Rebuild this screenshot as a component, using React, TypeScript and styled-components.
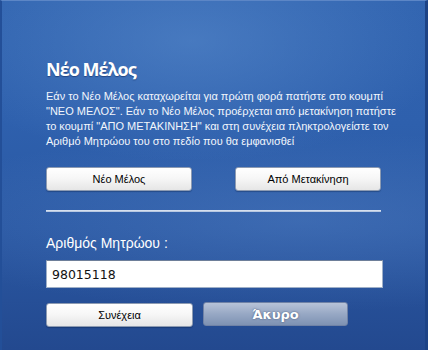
import styled, {createGlobalStyle} from 'styled-components';

const GlobalStyle = createGlobalStyle`
	html, body {
		margin: 0;
		padding: 0;
		background: #2a58a3;
	}
`;

const Panel = styled.div`
	box-sizing: border-box;
	width: 428px;
	height: 350px;
	display: flex;
	flex-direction: column;
	padding: 56px 44px 0 44px;
	overflow: hidden;
	border-top: 1px solid #5c86c6;
	border-left: 2px solid #234f98;
	border-right: 3px solid #1d4386;
	background:
		radial-gradient(ellipse 260px 120px at 190px 40px, rgba(90, 140, 205, 0.55), rgba(90, 140, 205, 0) 100%),
		radial-gradient(ellipse 420px 90px at 300px 220px, rgba(95, 140, 205, 0.35), rgba(95, 140, 205, 0) 100%),
		linear-gradient(180deg, #3164b0 0%, #2e60ad 35%, #2a58a3 65%, #23498f 100%);
	font-family: 'Liberation Sans', Arial, sans-serif;
	color: #ffffff;
`;

const Title = styled.h1`
	margin: 0;
	font-family: 'Open Sans', 'DejaVu Sans', sans-serif;
	font-size: 18px;
	font-weight: 700;
	line-height: 24px;
	letter-spacing: -1px;
	color: #ffffff;
	text-shadow: 0 1px 1px rgba(10, 30, 80, 0.5);
`;

const Info = styled.p`
	margin: 8px 0 0;
	font-size: 11px;
	line-height: 15px;
	color: #f2f6fc;
	white-space: nowrap;
`;

const ButtonRow = styled.div<{$top: number; $gap: number}>`
	display: flex;
	gap: ${p => p.$gap}px;
	margin-top: ${p => p.$top}px;
`;

const LightButton = styled.button`
	box-sizing: border-box;
	width: 147px;
	height: 24px;
	padding: 0;
	border: 1px solid #8d9bb2;
	border-radius: 3px;
	background: linear-gradient(180deg, #ffffff 0%, #f7f7f7 45%, #e6e6e6 100%);
	box-shadow: 0 1px 1px rgba(10, 30, 70, 0.35);
	font-family: 'Liberation Sans', Arial, sans-serif;
	font-size: 11px;
	color: #000000;
	cursor: pointer;
`;

const MutedButton = styled.button`
	box-sizing: border-box;
	width: 145px;
	height: 24px;
	margin-top: -1px;
	padding: 0;
	border: 1px solid #6f82a6;
	border-radius: 3px;
	background: linear-gradient(180deg, #b7c3d8 0%, #97a8c4 50%, #7e92b3 100%);
	font-family: 'DejaVu Sans', Verdana, sans-serif;
	font-size: 13px;
	font-weight: 700;
	color: #ffffff;
	text-shadow: 0 0 2px rgba(40, 60, 100, 0.8);
`;

const Divider = styled.hr`
	width: 335px;
	margin: 19px 0 0;
	border: none;
	height: 2px;
	background: linear-gradient(180deg, #e4ebf5 0%, #a9bddb 100%);
`;

const FieldLabel = styled.label`
	margin-top: 22px;
	font-size: 14px;
	line-height: 18px;
	color: #ffffff;
`;

const NumberInput = styled.input`
	box-sizing: border-box;
	width: 337px;
	height: 28px;
	margin-top: 8px;
	padding: 0 5px;
	border: 1px solid #9fb0c8;
	border-top-color: #6e7f99;
	background: #ffffff;
	font-family: 'DejaVu Sans', Verdana, sans-serif;
	font-size: 12.5px;
	color: #111111;
	outline: none;
`;

export default function App() {
	return (
		<>
			<GlobalStyle />
			<Panel>
				<Title>Νέο Μέλος</Title>
				<Info>
					Εάν το Νέο Μέλος καταχωρείται για πρώτη φορά πατήστε στο κουμπί
					<br />
					"ΝΕΟ ΜΕΛΟΣ". Εάν το Νέο Μέλος προέρχεται από μετακίνηση πατήστε
					<br />
					το κουμπί "ΑΠΟ ΜΕΤΑΚΙΝΗΣΗ" και στη συνέχεια πληκτρολογείστε τον
					<br />
					Αριθμό Μητρώου του στο πεδίο που θα εμφανισθεί
				</Info>
				<ButtonRow $top={18} $gap={43}>
					<LightButton>Νέο Μέλος</LightButton>
					<LightButton>Από Μετακίνηση</LightButton>
				</ButtonRow>
				<Divider />
				<FieldLabel htmlFor="am">Αριθμός Μητρώου :</FieldLabel>
				<NumberInput id="am" defaultValue="98015118" />
				<ButtonRow $top={15} $gap={10}>
					<LightButton>Συνέχεια</LightButton>
					<MutedButton>Άκυρο</MutedButton>
				</ButtonRow>
			</Panel>
		</>
	);
}
